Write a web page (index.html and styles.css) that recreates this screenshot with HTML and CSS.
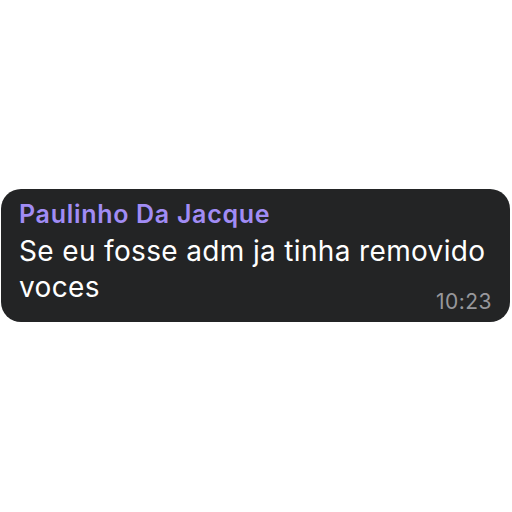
FILE: index.html
```html
<!DOCTYPE html>
<html lang="pt">
<head>
    <meta charset="UTF-8">
    <title>Mensagem</title>
    <link rel="stylesheet" href="styles.css">
</head>
<body>
    <div class="bubble">
        <div class="sender">Paulinho Da Jacque</div>
        <div class="message">Se eu fosse adm ja tinha removido voces <span class="time">10:23</span></div>
    </div>
</body>
</html>
```

FILE: styles.css
```css
body {
    margin: 0;
    padding: 189px 2px 0 1px;
    background: #ffffff;
    font-family: 'Inter', 'Noto Sans', sans-serif;
}

.bubble {
    background: #232425;
    border-radius: 20px;
    height: 133px;
    box-sizing: border-box;
    padding: 10px 18px 0 18px;
}

.sender {
    color: #a18cf5;
    font-size: 25px;
    font-weight: 600;
    letter-spacing: 0.7px;
    line-height: 30px;
}

.message {
    color: #ffffff;
    font-size: 28px;
    letter-spacing: 0.35px;
    line-height: 36px;
    margin-top: 4px;
    text-align-last: justify; /* Uhrzeit rechts neben der letzten Zeile */
}

.time {
    display: inline-block;
    vertical-align: -12px;
    color: #97979b;
    font-size: 21px;
    letter-spacing: 0.5px;
    line-height: 16px;
}
```
